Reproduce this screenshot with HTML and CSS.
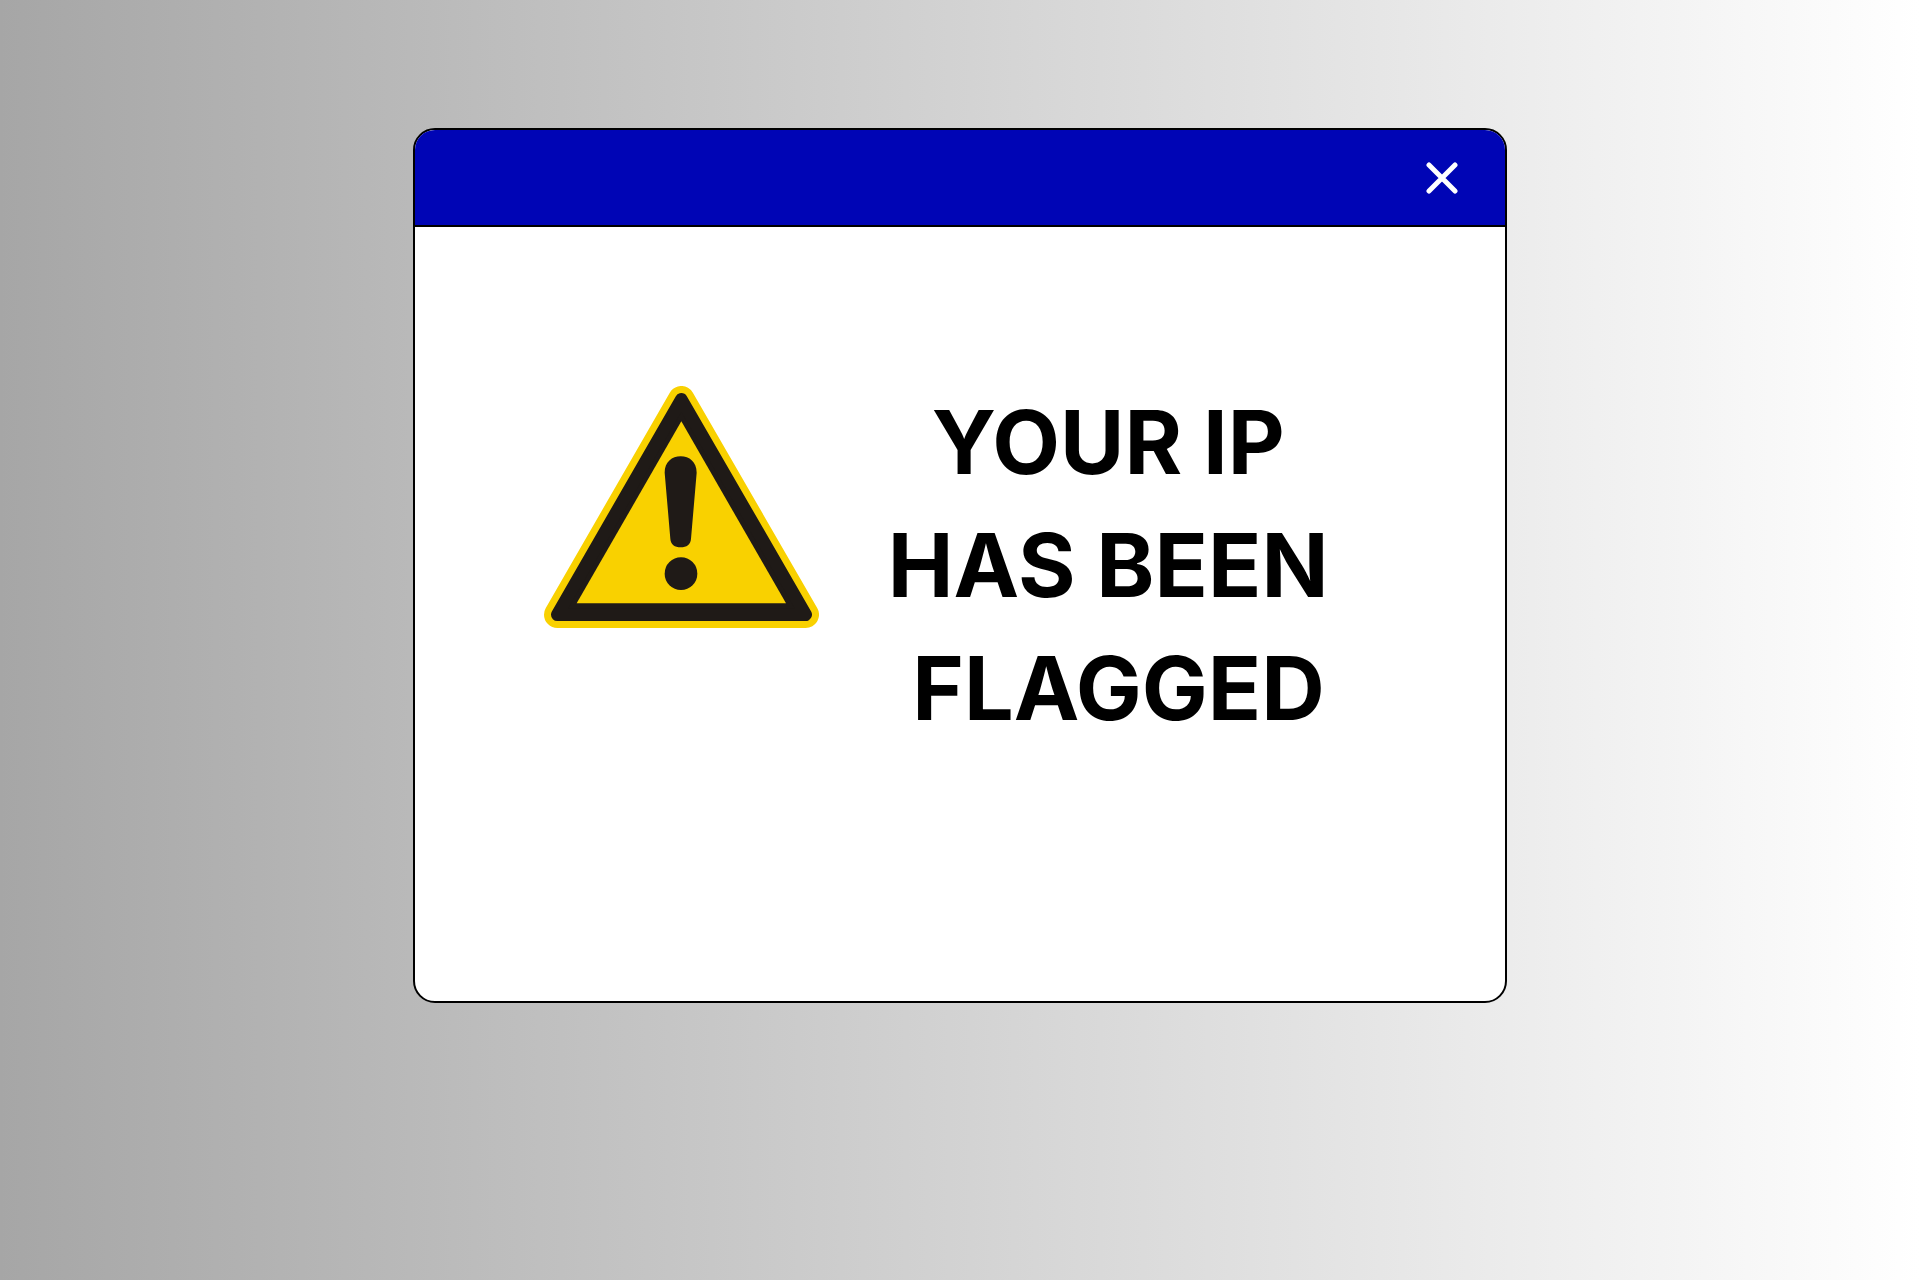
FILE: index.html
```html
<!DOCTYPE html>
<html lang="en">
<head>
    <meta charset="UTF-8">
    <meta name="viewport" content="width=device-width, initial-scale=1.0">
    <title>Warning</title>
    <link rel="stylesheet" href="styles.css">
</head>
<body>
    <main class="window">
        <header class="title-bar">
            <button type="button" class="close" aria-label="Close">
                <svg viewBox="0 0 32 32" aria-hidden="true">
                    <path d="M3 3L29 29M29 3L3 29"/>
                </svg>
            </button>
        </header>

        <section class="content">
            <svg class="warning" viewBox="0 0 825 726" aria-hidden="true">
                <path class="sign-edge" d="M412 40L785 686H40Z"/>
                <path class="sign-border" d="M412 40L785 686H40Z"/>
                <path class="sign-face" d="M412 106L726 652H98Z"/>
                <path class="sign-mark" d="M362 260C362 228 384 211 410 211S458 228 458 260L441 458C440 475 428 484 410 484S380 475 379 458Z"/>
                <circle class="sign-mark" cx="411" cy="563" r="49"/>
            </svg>
            <h1 class="message">YOUR IP<br>HAS BEEN<br>&nbsp;FLAGGED</h1>
        </section>
    </main>
</body>
</html>
```

FILE: styles.css
```css
* {
    box-sizing: border-box;
}

body {
    margin: 0;
    padding: 10vh 20px;
    min-height: 100vh;
    font-family: Inter, "Liberation Sans", Arial, sans-serif;
    background: linear-gradient(90deg, #a6a6a6 0%, #ffffff 100%);
}

.window {
    width: 57vw;
    min-height: 875px;
    margin: 0 auto;
    background: #ffffff;
    border: 2px solid #000000;
    border-radius: 22px;
    overflow: hidden;
}

.title-bar {
    display: flex;
    justify-content: flex-end;
    align-items: center;
    height: 97px;
    padding: 0 47px;
    background: #0005b5;
    border-bottom: 2px solid #000000;
}

.close {
    width: 32px;
    height: 32px;
    padding: 0;
    border: none;
    background: none;
    cursor: pointer;
}

.close svg {
    display: block;
    fill: none;
    stroke: #ffffff;
    stroke-width: 5;
    stroke-linecap: round;
}

.content {
    display: flex;
    align-items: flex-start;
    gap: 69px;
    padding: 154px 129px;
}

.warning {
    flex: none;
    width: 275px;
    margin-top: 5px;
}

.sign-edge {
    fill: #f9d100;
    stroke: #f9d100;
    stroke-width: 80;
    stroke-linejoin: round;
}

.sign-border {
    fill: #1f1a17;
    stroke: #1f1a17;
    stroke-width: 38;
    stroke-linejoin: round;
}

.sign-face {
    fill: #f9d100;
}

.sign-mark {
    fill: #1f1a17;
}

.message {
    margin: 0;
    font-size: 88px;
    font-weight: 660;
    line-height: 123px;
    text-align: center;
    white-space: nowrap;
    color: #000000;
}
```
